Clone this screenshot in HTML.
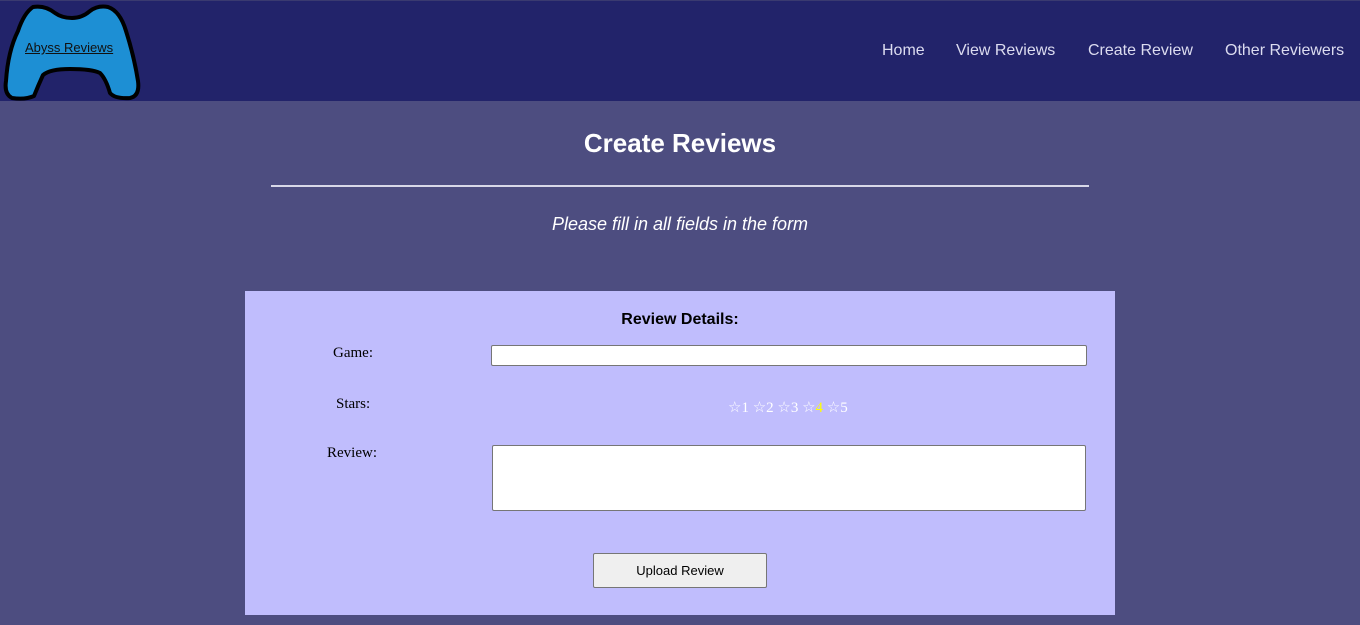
<!DOCTYPE html>
<html><head><style>
*{margin:0;padding:0;box-sizing:border-box}
body{width:1360px;height:625px;background:#4d4d80;font-family:"Liberation Sans",sans-serif;overflow:hidden;position:relative}
.hdr{position:absolute;left:0;top:0;width:1360px;height:101px;background:#22236a;border-top:1px solid #3a3a70}
.nav{position:absolute;top:41px;font-size:16px;color:#dcdcf0}
h1{position:absolute;top:128px;width:1360px;text-align:center;color:#fff;font-size:26px;font-weight:bold}
hr{position:absolute;left:271px;top:185px;width:818px;border:0;border-top:2px solid #d8d8e8}
.sub{position:absolute;top:214px;width:1360px;text-align:center;color:#fff;font-size:18px;font-style:italic}
.box{position:absolute;left:245px;top:291px;width:870px;height:324px;background:#c0bdfd}
.lbl{position:absolute;font-family:"Liberation Serif",serif;font-size:15px;color:#000}
.inp{position:absolute;background:#fff;border:1px solid #767676;border-radius:2px}
</style></head><body>
<div class="hdr">
<svg width="150" height="101" style="position:absolute;left:0;top:0">
<path d="M33 6 Q45 4 55 12 Q62 17 72 17 Q82 17 90 10 Q98 4 108 6 Q120 10 126 30 Q134 55 138 80 Q140 95 130 97 Q115 98 110 92 Q106 78 100 72 Q92 68 70 68 Q50 68 43 74 Q38 85 34 95 Q25 99 12 97 Q4 93 6 80 Q8 50 18 30 Q24 12 33 6Z" fill="#1d8fd4" stroke="#000" stroke-width="4" stroke-linejoin="round"/>
</svg>
<span style="position:absolute;left:25px;top:39px;font-size:13px;color:#111;text-decoration:underline">Abyss Reviews</span>
<span class="nav" style="left:882px">Home</span>
<span class="nav" style="left:956px">View Reviews</span>
<span class="nav" style="left:1088px">Create Review</span>
<span class="nav" style="left:1225px">Other Reviewers</span>
</div>
<h1>Create Reviews</h1>
<hr>
<div class="sub">Please fill in all fields in the form</div>
<div class="box">
<div style="position:absolute;top:20px;width:870px;text-align:center;font-weight:bold;font-size:16px">Review Details:</div>
<span class="lbl" style="left:88px;top:54px">Game:</span>
<div class="inp" style="left:246px;top:54px;width:596px;height:21px"></div>
<span class="lbl" style="left:91px;top:105px">Stars:</span>
<span class="lbl" style="left:483px;top:107px;color:#fff">☆1 ☆2 ☆3 ☆<span style="color:#ff0">4</span> ☆5</span>
<span class="lbl" style="left:82px;top:154px">Review:</span>
<div class="inp" style="left:247px;top:154px;width:594px;height:66px"></div>
<div style="position:absolute;left:348px;top:262px;width:174px;height:35px;background:#efefef;border:1px solid #767676;border-radius:2px;font-size:13px;text-align:center;line-height:33px">Upload Review</div>
</div>
</body></html>
